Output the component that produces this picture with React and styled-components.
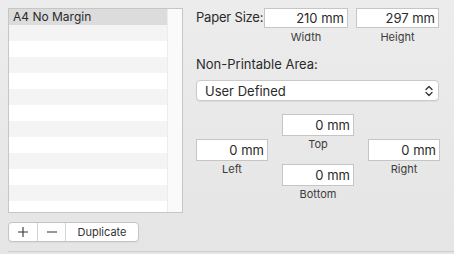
import React from "react";
import styled, { createGlobalStyle } from "styled-components";

const Global = createGlobalStyle`
  html, body { margin: 0; padding: 0; }
  body { font-family: "Inter", "Roboto", "Liberation Sans", sans-serif; }
`;

const Window = styled.div`
  width: 454px;
  height: 254px;
  box-sizing: border-box;
  background: linear-gradient(#ececec, #e5e5e5);
  display: flex;
  flex-direction: column;
  overflow: hidden;
`;

const Main = styled.div`
  display: flex;
  gap: 13px;
  padding: 8px 8px 0 8px;
  height: 251px;
  box-sizing: border-box;
`;

const Separator = styled.div`
  margin: 0 0 0 8px;
  height: 1px;
  background: #cfcfcf;
`;

const LeftCol = styled.div`
  width: 175px;
  flex: none;
  display: flex;
  flex-direction: column;
  gap: 9px;
`;

const ListBox = styled.div`
  height: 205px;
  box-sizing: border-box;
  border: 1px solid #c6c6c6;
  background: #fff;
  display: flex;
`;

const Rows = styled.div`
  flex: 1;
  display: flex;
  flex-direction: column;
  overflow: hidden;
`;

const Row = styled.div`
  height: 16px;
  flex: none;
  padding-left: 4px;
  font-size: 12px;
  line-height: 16px;
  color: #2a2a2a;
  background: ${(p) => (p.$selected ? "#dcdcdc" : p.$alt ? "#f4f4f4" : "#ffffff")};
`;

const Scroller = styled.div`
  width: 14px;
  background: #fafafa;
  border-left: 1px solid #ececec;
`;

const SegGroup = styled.div`
  display: flex;
  width: 131px;
  height: 20px;
  box-sizing: border-box;
  border: 1px solid #c4c4c4;
  border-radius: 4px;
  background: #fff;
  overflow: hidden;
  box-shadow: 0 1px 0 rgba(0, 0, 0, 0.04);
`;

const Seg = styled.div`
  width: ${(p) => p.$w}px;
  flex: ${(p) => (p.$w ? "none" : "1")};
  display: flex;
  align-items: center;
  justify-content: center;
  font-size: 11px;
  color: #333;
  border-left: ${(p) => (p.$first ? "none" : "1px solid #d4d4d4")};
  box-sizing: border-box;
`;

const RightCol = styled.div`
  flex: 1;
  display: flex;
  flex-direction: column;
`;

const SizeRow = styled.div`
  display: flex;
  align-items: flex-start;
`;

const Label = styled.div`
  font-size: 13px;
  color: #2a2a2a;
  line-height: 19px;
  white-space: nowrap;
  flex: none;
  letter-spacing: -0.2px;
  width: ${(p) => (p.$w ? p.$w + "px" : "auto")};
`;

const FieldUnit = styled.div`
  display: flex;
  flex-direction: column;
  align-items: center;
  flex: none;
  width: ${(p) => p.$w}px;
  margin-left: ${(p) => p.$ml || 0}px;
`;

const Field = styled.div`
  width: 100%;
  height: ${(p) => p.$h}px;
  box-sizing: border-box;
  border: 1px solid #c5c5c5;
  background: #fff;
  font-size: 13px;
  color: #2a2a2a;
  text-align: right;
  padding-right: 3px;
  line-height: ${(p) => p.$h - 2}px;
`;

const SubLabel = styled.div`
  font-size: 11px;
  color: #3c3c3c;
  line-height: 14px;
  margin-top: ${(p) => p.$mt || 2}px;
`;

const SectionLabel = styled.div`
  font-size: 13px;
  color: #2a2a2a;
  margin-top: 12px;
  line-height: 16px;
`;

const Select = styled.div`
  margin-top: 8px;
  width: 243px;
  height: 21px;
  box-sizing: border-box;
  border: 1px solid #cacaca;
  border-radius: 4px;
  background: #fff;
  display: flex;
  align-items: center;
  justify-content: space-between;
  padding: 0 4px 0 8px;
  font-size: 13px;
  color: #2a2a2a;
  box-shadow: 0 1px 1px rgba(0, 0, 0, 0.06);
`;

const MarginGrid = styled.div`
  margin-top: 13px;
  display: grid;
  grid-template-columns: 72px 72px 72px;
  grid-auto-rows: 25px;
  column-gap: 14px;
`;

const Cell = styled.div`
  grid-column: ${(p) => p.$col};
  grid-row: ${(p) => p.$row} / span 2;
  display: flex;
  flex-direction: column;
  align-items: center;
`;

const Chevrons = () => (
  <svg width="10" height="14" viewBox="0 0 10 14">
    <path d="M2 5.5 L5 2.5 L8 5.5" fill="none" stroke="#333" strokeWidth="1.3" strokeLinecap="round" strokeLinejoin="round" />
    <path d="M2 8.5 L5 11.5 L8 8.5" fill="none" stroke="#333" strokeWidth="1.3" strokeLinecap="round" strokeLinejoin="round" />
  </svg>
);

const Plus = () => (
  <svg width="12" height="12" viewBox="0 0 12 12">
    <path d="M6 1 V11 M1 6 H11" stroke="#333" strokeWidth="1.1" />
  </svg>
);

const Minus = () => (
  <svg width="12" height="12" viewBox="0 0 12 12">
    <path d="M1 6 H11" stroke="#333" strokeWidth="1.1" />
  </svg>
);

const margins = [
  { name: "Top", col: 2, row: 1 },
  { name: "Left", col: 1, row: 2 },
  { name: "Right", col: 3, row: 2 },
  { name: "Bottom", col: 2, row: 3 },
];

export default function App() {
  const rows = Array.from({ length: 13 }, (_, i) => i);
  return (
    <Window>
      <Global />
      <Main>
        <LeftCol>
          <ListBox>
            <Rows>
              {rows.map((i) => (
                <Row key={i} $selected={i === 0} $alt={i % 2 === 1}>
                  {i === 0 ? "A4 No Margin" : ""}
                </Row>
              ))}
            </Rows>
            <Scroller />
          </ListBox>
          <SegGroup>
            <Seg $w={28} $first>
              <Plus />
            </Seg>
            <Seg $w={28}>
              <Minus />
            </Seg>
            <Seg>Duplicate</Seg>
          </SegGroup>
        </LeftCol>
        <RightCol>
          <SizeRow>
            <Label $w={68}>Paper Size:</Label>
            <FieldUnit $w={84}>
              <Field $h={20}>210 mm</Field>
              <SubLabel>Width</SubLabel>
            </FieldUnit>
            <FieldUnit $w={83} $ml={8}>
              <Field $h={20}>297 mm</Field>
              <SubLabel>Height</SubLabel>
            </FieldUnit>
          </SizeRow>
          <SectionLabel>Non-Printable Area:</SectionLabel>
          <Select>
            <span>User Defined</span>
            <Chevrons />
          </Select>
          <MarginGrid>
            {margins.map((m) => (
              <Cell key={m.name} $col={m.col} $row={m.row}>
                <Field $h={22}>0 mm</Field>
                <SubLabel $mt={1}>{m.name}</SubLabel>
              </Cell>
            ))}
          </MarginGrid>
        </RightCol>
      </Main>
      <Separator />
    </Window>
  );
}
